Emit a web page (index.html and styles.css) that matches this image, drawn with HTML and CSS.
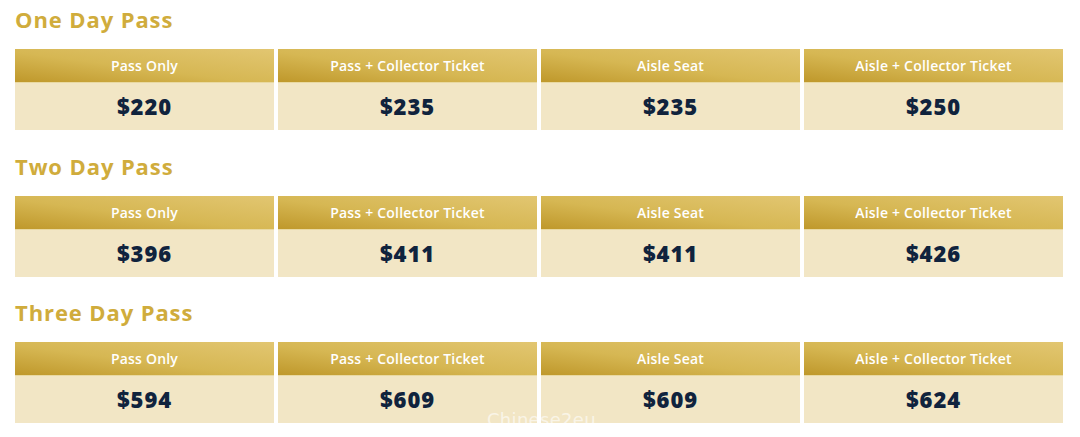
FILE: index.html
```html
<!DOCTYPE html>
<html>
<head>
<meta charset="utf-8">
<link rel="stylesheet" href="styles.css">
</head>
<body>
<main class="page">
  <section class="pass">
    <h2 class="pass-title">One Day Pass</h2>
    <div class="price-grid">
      <div class="cell"><div class="cell-head">Pass Only</div><div class="cell-price">$220</div></div>
      <div class="cell"><div class="cell-head">Pass + Collector Ticket</div><div class="cell-price">$235</div></div>
      <div class="cell"><div class="cell-head">Aisle Seat</div><div class="cell-price">$235</div></div>
      <div class="cell"><div class="cell-head">Aisle + Collector Ticket</div><div class="cell-price">$250</div></div>
    </div>
  </section>
  <section class="pass">
    <h2 class="pass-title">Two Day Pass</h2>
    <div class="price-grid">
      <div class="cell"><div class="cell-head">Pass Only</div><div class="cell-price">$396</div></div>
      <div class="cell"><div class="cell-head">Pass + Collector Ticket</div><div class="cell-price">$411</div></div>
      <div class="cell"><div class="cell-head">Aisle Seat</div><div class="cell-price">$411</div></div>
      <div class="cell"><div class="cell-head">Aisle + Collector Ticket</div><div class="cell-price">$426</div></div>
    </div>
  </section>
  <section class="pass">
    <h2 class="pass-title">Three Day Pass</h2>
    <div class="price-grid">
      <div class="cell"><div class="cell-head">Pass Only</div><div class="cell-price">$594</div></div>
      <div class="cell"><div class="cell-head">Pass + Collector Ticket</div><div class="cell-price">$609</div></div>
      <div class="cell"><div class="cell-head">Aisle Seat</div><div class="cell-price">$609</div></div>
      <div class="cell"><div class="cell-head">Aisle + Collector Ticket</div><div class="cell-price">$624</div></div>
    </div>
  </section>
  <div class="watermark">Chinese2eu</div>
</main>
</body>
</html>
```

FILE: styles.css
```css
* { box-sizing: border-box; }
html, body { margin: 0; padding: 0; background: #ffffff; }
body { font-family: "Open Sans", Lato, sans-serif; }
.page {
  position: relative;
  width: 1080px;
  height: 437px;
  overflow: hidden;
  padding: 4px 17px 0 15px;
}
.pass { margin-bottom: 20.5px; }
.pass-title {
  margin: 0 0 15px 0;
  font-size: 22px;
  line-height: 30px;
  font-weight: 700;
  color: #d0ac3c;
  letter-spacing: 0.9px;
}
.price-grid {
  display: grid;
  grid-template-columns: repeat(4, 1fr);
  column-gap: 4px;
}
.cell { display: flex; flex-direction: column; }
.cell-head {
  height: 34px;
  line-height: 33px;
  text-align: center;
  color: #ffffff;
  font-size: 14px;
  font-weight: 600;
  letter-spacing: 0.2px;
  background: linear-gradient(to top right, #bf982b 0%, #d6b753 45%, #e2c671 100%);
  border-bottom: 1px solid #e9d9a2;
}
.cell-price {
  height: 47px;
  line-height: 47px;
  text-align: center;
  background: #f2e6c5;
  color: #10233d;
  font-size: 22px;
  font-weight: 800;
  letter-spacing: 0.9px;
}
.watermark {
  position: absolute;
  left: 487px;
  top: 409px;
  font-family: "DejaVu Sans", sans-serif;
  font-size: 18px;
  color: rgba(255, 255, 255, 0.6);
  letter-spacing: 0.3px;
}
```
